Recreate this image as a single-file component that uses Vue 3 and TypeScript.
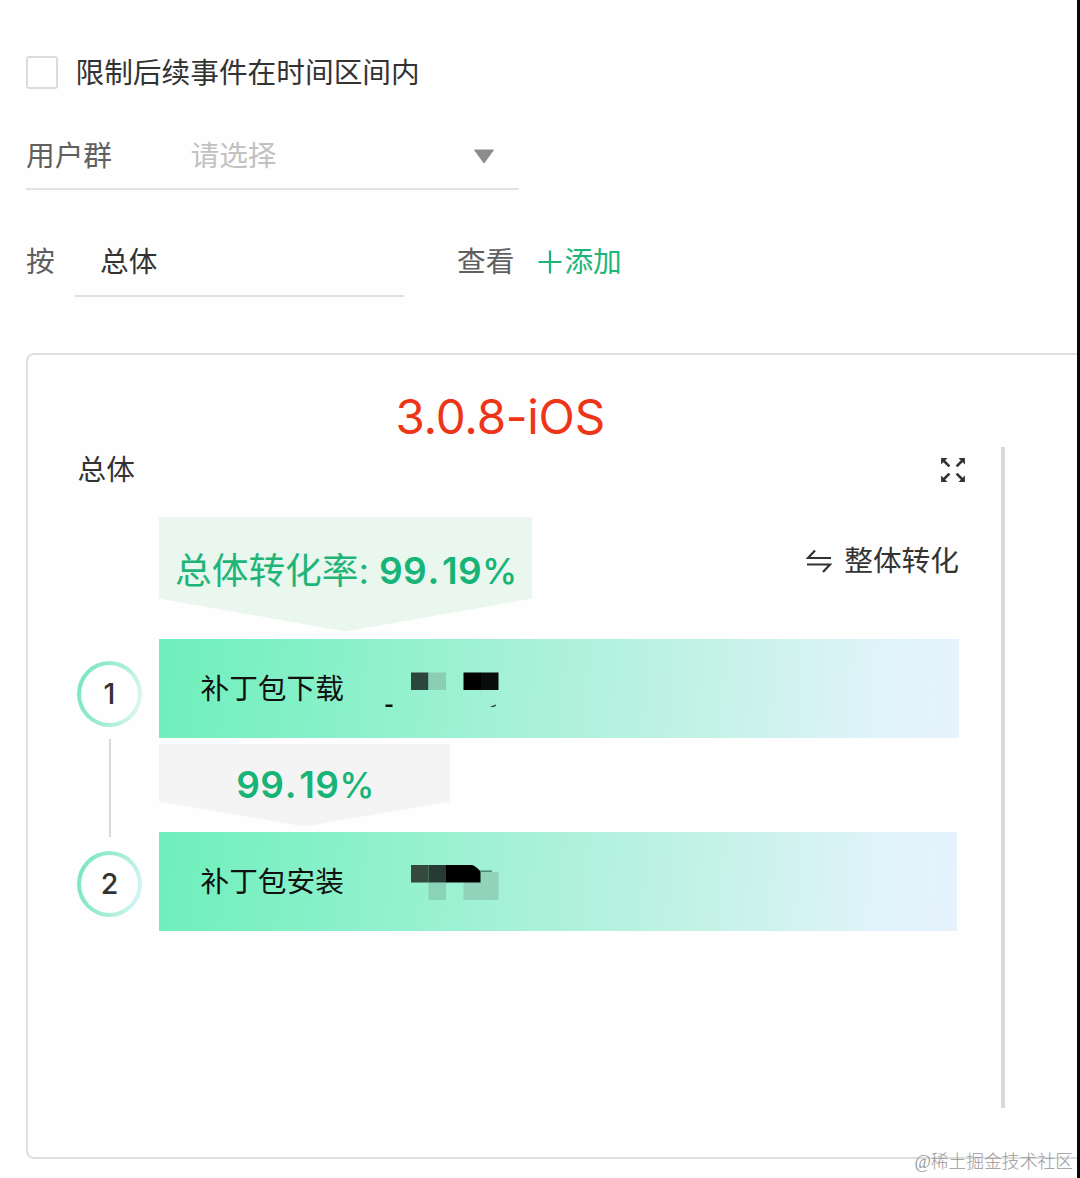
<script setup lang="ts">
import { ref } from 'vue'

interface Block { x: number; y: number; w: number; h: number; color: string }
interface Step { id: number; name: string; blocks: Block[] }

const limited = ref(false)
const version = '3.0.8-iOS'
const rate = { int: '99', dec: '19' }

// masked counts, coordinates relative to the bar
const steps: Step[] = [
  {
    id: 1,
    name: '补丁包下载',
    blocks: [
      { x: 252, y: 33.5, w: 17.5, h: 17.5, color: '#2c463d' },
      { x: 269.5, y: 33.5, w: 17.5, h: 17.5, color: '#8acfb5' },
      { x: 304.5, y: 33.5, w: 17.5, h: 17.5, color: '#000' },
      { x: 322, y: 33.5, w: 17.5, h: 17.5, color: '#080c0b' },
      { x: 226.5, y: 65.5, w: 7, h: 2.5, color: '#07110d' }
    ]
  },
  {
    id: 2,
    name: '补丁包安装',
    blocks: [
      { x: 269.5, y: 50.5, w: 17.5, h: 17.5, color: '#8bd3b8' },
      { x: 304.5, y: 40, w: 35, h: 28, color: '#90d2ba' },
      { x: 252, y: 33, w: 17.5, h: 17.5, color: '#35493f' },
      { x: 269.5, y: 33, w: 17.5, h: 17.5, color: '#263b33' }
    ]
  }
]
</script>

<template>
  <div class="page">
    <label class="limit-row">
      <input v-model="limited" type="checkbox" class="checkbox">
      <span>限制后续事件在时间区间内</span>
    </label>

    <div class="select-row">
      <span class="select-label">用户群</span>
      <span class="placeholder">请选择</span>
      <svg class="caret" width="22" height="15" viewBox="0 0 22 15">
        <path d="M1.5 1h19L11 14z" fill="#8c8c8c" stroke="#8c8c8c" stroke-linejoin="round" />
      </svg>
    </div>

    <div class="group-row">
      <span class="group-label">按</span>
      <span class="group-value">总体</span>
      <span class="group-view">查看</span>
      <span class="add">
        <svg width="24" height="24" viewBox="0 0 24 24">
          <path d="M0.5 12h23M12 0.5v23" stroke="#1fb579" stroke-width="2.2" />
        </svg>
        <span>添加</span>
      </span>
    </div>

    <section class="card">
      <h1 class="version">{{ version }}</h1>
      <div class="panel">
        <div class="panel-head">
          <span>总体</span>
          <svg width="26" height="26" viewBox="0 0 26 26" fill="#333" stroke="#333">
            <g v-for="a in [0, 90, 180, 270]" :key="a" :transform="`rotate(${a} 13 13)`">
              <path d="M1.8 1.8h4l-4 4z" stroke-width="1.4" />
              <path d="M3 3l6.4 6.4" stroke-width="2.6" />
            </g>
          </svg>
        </div>

        <div class="rate-row">
          <div class="total-rate">
            <span>总体转化率:</span>
            <span class="rate">{{ rate.int }}<span class="dot">.</span>{{ rate.dec }}<span class="percent">%</span></span>
          </div>
          <div class="switch">
            <svg width="26" height="24" viewBox="0 0 26 24" fill="none" stroke="#333" stroke-width="2.2">
              <path d="M25 9H2L9 1.5M1 15.5h23L17 23" />
            </svg>
            <span>整体转化</span>
          </div>
        </div>

        <div class="funnel">
          <div class="rail">
            <template v-for="(s, i) in steps" :key="s.id">
              <span v-if="i > 0" class="rail-line"></span>
              <span class="num" :class="'num-' + s.id"><span>{{ s.id }}</span></span>
            </template>
          </div>
          <div class="bars">
            <template v-for="(s, i) in steps" :key="s.id">
              <div v-if="i > 0" class="step-rate">
                <span class="rate">{{ rate.int }}<span class="dot">.</span>{{ rate.dec }}<span class="percent">%</span></span>
              </div>
              <div class="bar" :class="'bar-' + s.id">
                <span>{{ s.name }}</span>
                <svg class="mask" width="400" height="98" viewBox="0 0 400 98">
                  <rect
                    v-for="(b, n) in s.blocks"
                    :key="n"
                    :x="b.x"
                    :y="b.y"
                    :width="b.w"
                    :height="b.h"
                    :fill="b.color"
                  />
                  <path v-if="s.id === 1" d="M331 67.5l6-2v1.5l-3 1.2z" fill="#34594b" />
                  <template v-else>
                    <path d="M287 33h26q4 1 8.5 6.5v11H287z" fill="#000" />
                    <path d="M321 39.2h12" stroke="#4b8570" stroke-width="1.5" />
                  </template>
                </svg>
              </div>
            </template>
          </div>
        </div>
      </div>
    </section>

    <span class="watermark">@稀土掘金技术社区</span>
  </div>
</template>

<style>
body { margin: 0; background: #fff; }
</style>

<style scoped>
.page {
  position: relative;
  box-sizing: border-box;
  width: 1080px;
  height: 1178px;
  padding: 56px 0 0 26px;
  border-right: 3px solid #080808;
  overflow: hidden;
  background: #fefefe;
  font-family: Inter, 'Noto Sans CJK SC', sans-serif;
  font-size: 28.7px;
  line-height: 34px;
  color: #333;
}

.limit-row { display: flex; align-items: center; gap: 17.5px; height: 33px; }
.checkbox {
  appearance: none;
  box-sizing: border-box;
  width: 32px;
  height: 33px;
  margin: 0;
  border: 2px solid #dcdcdc;
  border-radius: 3px;
  background: #fff;
}

.select-row {
  display: flex;
  align-items: center;
  box-sizing: border-box;
  width: 493px;
  height: 68px;
  margin-top: 33px;
  padding: 1px 24px 0 0;
  border-bottom: 2px solid #e3e3e3;
}
.select-label { width: 164.5px; color: #606060; }
.placeholder { color: #c2c2c2; }
.caret { margin: 2px 0 0 auto; }

.group-row { display: flex; align-items: center; height: 70px; margin-top: 37px; color: #606060; }
.group-label { width: 49px; }
.group-value {
  box-sizing: border-box;
  width: 329px;
  height: 70px;
  padding-left: 25px;
  border-bottom: 2px solid #e0e0e0;
  line-height: 70px;
  color: #333;
}
.group-view { margin-left: 53px; }
.add { display: flex; align-items: center; gap: 2px; margin-left: 24px; color: #1fb579; }

.card {
  box-sizing: border-box;
  width: 1070px;
  height: 806px;
  margin-top: 56px;
  padding: 32.5px 0 0 49.5px;
  border: 2px solid #dedede;
  border-radius: 8px;
}
.version {
  height: 59px;
  margin: 0;
  padding-left: 318px;
  font-size: 47.5px;
  font-weight: 400;
  line-height: 57px;
  letter-spacing: -0.25px;
  color: #ee3517;
}

.panel {
  box-sizing: border-box;
  width: 927px;
  height: 661px;
  padding-right: 40px;
  border-right: 4px solid #d9d9d9;
}
.panel-head { display: flex; justify-content: space-between; align-items: center; height: 46px; }
.panel-head svg { margin-right: -5px; }

.rate-row { display: flex; justify-content: space-between; height: 115px; margin: 24px 0 7px 81.5px; }
.total-rate {
  display: flex;
  box-sizing: border-box;
  width: 373px;
  padding: 29px 0 0 16px;
  background: #eaf7ee;
  clip-path: polygon(0 0, 100% 0, 100% 82px, 50% 100%, 0 82px);
  font-size: 36.7px;
  line-height: 50px;
  white-space: nowrap;
  gap: 10px;
  color: #1fb579;
}
.rate { font-size: 37px; font-weight: 600; letter-spacing: 0.3px; color: #16b477; white-space: nowrap; }
.dot { margin: 0 2.5px 0 0.5px; }
.percent { font-size: 35.5px; font-weight: 500; }
.switch { display: flex; align-items: center; gap: 12px; height: 34px; margin: 27px 1.5px 0 0; }

.funnel { display: flex; gap: 17px; margin-left: -0.5px; }
.rail { display: flex; flex-direction: column; align-items: center; width: 65px; padding-top: 22px; }
.num { box-sizing: border-box; width: 65px; height: 66px; padding: 4px; border-radius: 50%; background: linear-gradient(105deg, #72e6b8, #a5edd5 55%, #e9f8f8); }
.num span {
  display: flex;
  align-items: center;
  justify-content: center;
  box-sizing: border-box;
  height: 100%;
  padding-top: 1px;
  border-radius: 50%;
  background: #fefefe;
  font-size: 28.5px;
  font-weight: 500;
}
.num-2 { background: linear-gradient(105deg, #72e6b8, #a5edd5 55%, #dcf7fb); }
.rail-line { width: 2px; height: 98px; margin: 12px 0 14px; background: #d8d8d8; }

.bars { width: 800px; }
.bar {
  position: relative;
  box-sizing: border-box;
  height: 99px;
  padding-left: 41.5px;
  background: linear-gradient(95deg, #6eefbb, #8cf1cb 25%, #a9f1d9 47%, #c3f2e6 68%, #dff3fa 89%, #e6f2fd);
  line-height: 99px;
  color: #111;
}
.bar-2 { width: 798px; }
.mask { position: absolute; left: 0; top: 0; }
.step-rate {
  box-sizing: border-box;
  width: 291px;
  height: 83px;
  margin: 6px 0 5.5px;
  padding: 17px 0 0 2px;
  background: #f4f4f4;
  clip-path: polygon(0 0, 100% 0, 100% 58px, 50% 100%, 0 58px);
  line-height: 48px;
  text-align: center;
}

.watermark {
  position: absolute;
  right: 4px;
  bottom: 4px;
  font-family: 'Liberation Serif', 'Noto Sans CJK SC', serif;
  font-size: 17.8px;
  font-weight: 300;
  line-height: 24px;
  color: #999;
}
</style>
